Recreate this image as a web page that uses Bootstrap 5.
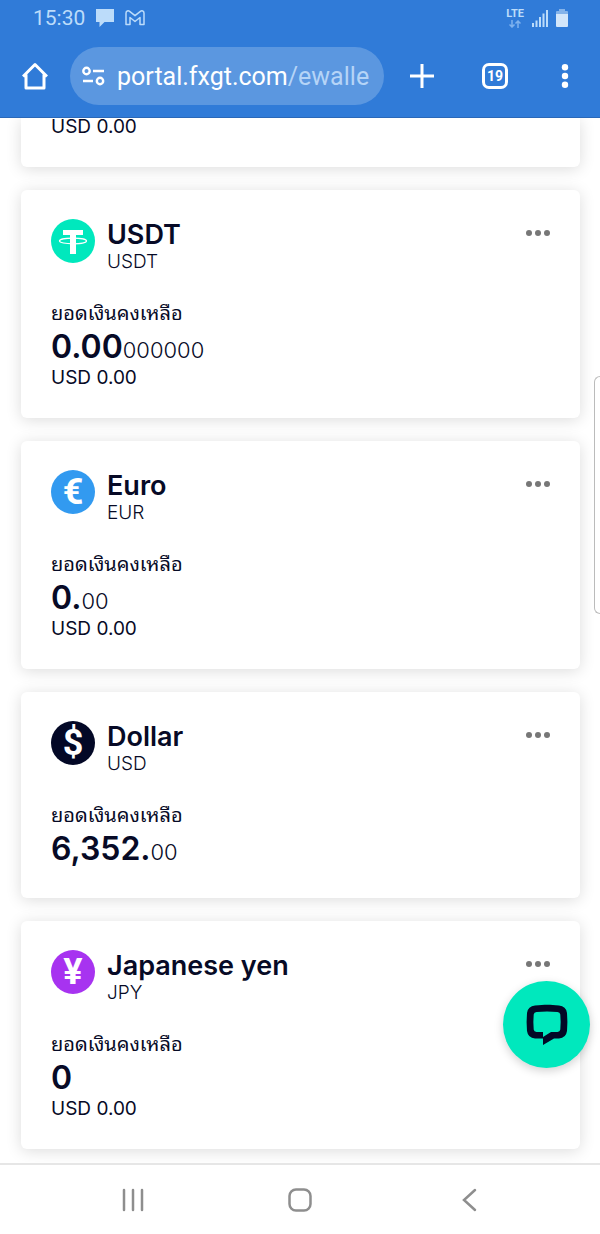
<!DOCTYPE html>
<html lang="th">
<head>
<meta charset="utf-8">
<meta name="viewport" content="width=device-width, initial-scale=1">
<title>FXGT eWallet</title>
<link href="https://cdn.jsdelivr.net/npm/bootstrap@5.3.0/dist/css/bootstrap.min.css" rel="stylesheet">
<style>
  :root { --ink: #070a26; --brand: #307bd8; --mint: #00e8bd; }
  body { font-family: Inter, "Noto Sans", sans-serif; color: var(--ink); background: #fff; }
  button { border: 0; background: none; padding: 0; color: inherit; line-height: 1; }
  svg { display: block; }
  .browser-bar { z-index: 2; background: var(--brand); border-bottom: 1px solid #2a68b8; font-family: Roboto, sans-serif; color: #fff; }
  .status-row { height: 36px; padding: 0 32px 0 33px; color: #bcdcfa; font-size: 21px; line-height: 36px; }
  .notices { gap: 10px; }
  .lte { font-size: 11px; font-weight: 700; line-height: 12px; }
  .toolbar-row { padding: 11px 26px 12px 22px; gap: 22px; }
  .address { min-width: 0; height: 58px; border-radius: 29px; background: #5b97e0; padding: 0 10px 0 12px; gap: 12px; font-size: 25px; }
  .address .path { color: #b5d4f7; }
  .actions { gap: 48px; padding-left: 4px; }
  .tab-count { width: 26px; height: 26px; border: 3px solid #fff; border-radius: 7px; font-size: 14px; font-weight: 700; }
  .wallets { padding: 0 20px 14px 21px; gap: 23px; }
  .wallet { border: 0; border-radius: 6px; padding: 29px 30px; box-shadow: 0 2px 16px rgba(0, 0, 0, .14); }
  .wallet:not(.wallet-cut) { min-height: 205px; }
  .wallet-cut { padding-top: 0; padding-bottom: 31px; border-top-left-radius: 0; border-top-right-radius: 0; }
  .wallet-cut .fiat { line-height: 18px; }
  .wallet-head { gap: 12px; margin-bottom: 24px; }
  .coin { width: 44px; height: 44px; border-radius: 50%; color: #fff; font: 700 36px/44px Roboto, sans-serif; flex: none; }
  .coin-usdt { background: var(--mint); }
  .coin-eur { background: #329af0; }
  .coin-usd { background: #030826; }
  .coin-jpy { background: #a733f0; }
  .coin-name { font-size: 27px; line-height: 32px; font-weight: 600; margin: 0; }
  .coin-code { font-size: 19px; line-height: 22px; font-weight: 300; }
  .caption-th { font-family: "Noto Sans Thai Looped", Loma, Garuda, Waree, "Noto Serif Thai", "Noto Sans Thai", sans-serif; font-size: 20px; line-height: 28px; margin-bottom: 2px; }
  .amount { font-size: 32px; line-height: 40px; font-weight: 600; }
  .amount-tail { font-size: 22px; line-height: 22px; font-weight: 300; }
  .fiat { font-size: 19px; line-height: 22px; }
  .more { margin-top: 10px; }
  .chat { position: fixed; right: 10px; bottom: 166px; width: 87px; height: 87px; border-radius: 50%; background: var(--mint); box-shadow: 0 3px 10px rgba(0, 0, 0, .18); }
  .edge-handle { position: fixed; right: 0; top: 376px; width: 6px; height: 238px; border: 1px solid #bbb; border-right: 0; border-radius: 8px 0 0 8px; background: #fff; }
  .system-nav { z-index: 1; background: #fff; border-top: 2px solid #e6e6e6; height: 71px; padding: 0 49px; }
</style>
</head>
<body class="d-flex flex-column min-vh-100">
<header class="browser-bar position-relative">
  <div class="status-row d-flex align-items-center justify-content-between">
    <div class="notices d-flex align-items-center">
      <span>15:30</span>
      <svg width="20" height="18" viewBox="0 0 20 18" fill="currentColor"><path d="M1 0h18v13h-9.500l-5 5v-5H1z"/></svg>
      <svg width="20" height="16" viewBox="0 0 20 16" fill="none" stroke="currentColor" stroke-width="1.500" stroke-linejoin="round"><path d="M1 14.500V3.200C1 .8 3.200.3 4.600 1.400L10 5.700l5.400-4.300C16.800.3 19 .8 19 3.200V14.500h-4V7.500l-5 4-5-4v7z"/></svg>
    </div>
    <div class="d-flex align-items-center gap-2">
      <div class="lte text-center">LTE
        <svg class="mx-auto" width="12" height="8" viewBox="0 0 12 8" fill="none" stroke="#7fb2ee" stroke-width="1.500"><path d="M3 0v7M.5 4.500 3 7l2.500-2.500M9 8V1M6.500 3.500 9 1l2.500 2.500"/></svg>
      </div>
      <svg width="16" height="17" viewBox="0 0 16 17" fill="currentColor"><path d="M0 13h2v4H0zM3.500 10.500h2V17h-2zM7 7h2v10H7zM10.500 3.500h2V17h-2zM14 0h2v17h-2z"/></svg>
      <svg width="12" height="18" viewBox="0 0 12 18"><path d="M3 0h6v2h2q1 0 1 1v2H0V3q0-1 1-1h2z" fill="#84b3ea"/><path d="M0 5h12v12q0 1-1 1H1q-1 0-1-1z" fill="#d3e6fa"/></svg>
    </div>
  </div>
  <div class="toolbar-row d-flex align-items-center">
    <button type="button" aria-label="Home"><svg width="26" height="28" viewBox="0 0 26 28" fill="none" stroke="#fff" stroke-width="3" stroke-linejoin="round"><path d="M1 14.500 13 2.500l12 12M4 12.500V26h18V12.500"/></svg></button>
    <button type="button" class="address d-flex align-items-center flex-grow-1" aria-label="Address">
      <svg class="flex-shrink-0" width="23" height="20" viewBox="0 0 23 20" fill="none" stroke="#fff" stroke-width="2.400"><circle cx="4.500" cy="5" r="3.200"/><path d="M11 5h11M1 15h10"/><circle cx="18" cy="15" r="3.200"/></svg>
      <span class="text-nowrap">portal.fxgt.com<span class="path">/ewalle</span></span>
    </button>
    <div class="actions d-flex align-items-center">
      <button type="button" aria-label="New tab"><svg width="24" height="24" viewBox="0 0 24 24" stroke="#fff" stroke-width="3"><path d="M12 0v24M0 12h24"/></svg></button>
      <button type="button" class="tab-count" aria-label="Open tabs">19</button>
      <button type="button" aria-label="Menu"><svg width="18" height="24" viewBox="0 0 18 24" fill="#fff"><circle cx="9" cy="3.200" r="3.200"/><circle cx="9" cy="12" r="3.200"/><circle cx="9" cy="20.800" r="3.200"/></svg></button>
    </div>
  </div>
</header>

<main class="wallets d-flex flex-column flex-grow-1">
  <section class="card wallet wallet-cut"><div class="fiat">USD 0.00</div></section>

  <section class="card wallet">
    <div class="wallet-head d-flex align-items-start">
      <div class="coin coin-usdt"><svg width="44" height="44" viewBox="0 0 44 44"><path d="M12 11h20v5h-7v19h-6V16h-7z" fill="#fff"/><ellipse cx="22" cy="22" rx="13.500" ry="2.800" fill="none" stroke="#fff" stroke-width="1.200"/><path d="M19 21h6v3h-6z" fill="#fff"/></svg></div>
      <div class="flex-grow-1"><h2 class="coin-name">USDT</h2><div class="coin-code">USDT</div></div>
      <button type="button" class="more" aria-label="More"><svg width="24" height="8" viewBox="0 0 24 8" fill="#777"><circle cx="3" cy="4" r="3"/><circle cx="12" cy="4" r="3"/><circle cx="21" cy="4" r="3"/></svg></button>
    </div>
    <div class="caption-th">ยอดเงินคงเหลือ</div>
    <div class="amount">0.00<span class="amount-tail">000000</span></div>
    <div class="fiat">USD 0.00</div>
  </section>

  <section class="card wallet">
    <div class="wallet-head d-flex align-items-start">
      <div class="coin coin-eur text-center">€</div>
      <div class="flex-grow-1"><h2 class="coin-name">Euro</h2><div class="coin-code">EUR</div></div>
      <button type="button" class="more" aria-label="More"><svg width="24" height="8" viewBox="0 0 24 8" fill="#777"><circle cx="3" cy="4" r="3"/><circle cx="12" cy="4" r="3"/><circle cx="21" cy="4" r="3"/></svg></button>
    </div>
    <div class="caption-th">ยอดเงินคงเหลือ</div>
    <div class="amount">0.<span class="amount-tail">00</span></div>
    <div class="fiat">USD 0.00</div>
  </section>

  <section class="card wallet">
    <div class="wallet-head d-flex align-items-start">
      <div class="coin coin-usd text-center">$</div>
      <div class="flex-grow-1"><h2 class="coin-name">Dollar</h2><div class="coin-code">USD</div></div>
      <button type="button" class="more" aria-label="More"><svg width="24" height="8" viewBox="0 0 24 8" fill="#777"><circle cx="3" cy="4" r="3"/><circle cx="12" cy="4" r="3"/><circle cx="21" cy="4" r="3"/></svg></button>
    </div>
    <div class="caption-th">ยอดเงินคงเหลือ</div>
    <div class="amount">6,352.<span class="amount-tail">00</span></div>
  </section>

  <section class="card wallet">
    <div class="wallet-head d-flex align-items-start">
      <div class="coin coin-jpy text-center">¥</div>
      <div class="flex-grow-1"><h2 class="coin-name">Japanese yen</h2><div class="coin-code">JPY</div></div>
      <button type="button" class="more" aria-label="More"><svg width="24" height="8" viewBox="0 0 24 8" fill="#777"><circle cx="3" cy="4" r="3"/><circle cx="12" cy="4" r="3"/><circle cx="21" cy="4" r="3"/></svg></button>
    </div>
    <div class="caption-th">ยอดเงินคงเหลือ</div>
    <div class="amount">0</div>
    <div class="fiat">USD 0.00</div>
  </section>
</main>

<div class="edge-handle"></div>
<button type="button" class="chat d-flex align-items-center justify-content-center" aria-label="Chat">
  <svg width="42" height="42" viewBox="0 0 42 42"><path fill="#030826" fill-rule="evenodd" d="M9 1.500C19 .5 24 .5 33 1.500q7 .5 8 7.500.8 9 0 18-1 7-8 7.500h-5L17 41v-6.500H9q-7-.5-8-7.500-.8-9 0-18 1-7 8-7.500zM10.500 8q-2.500.3-2.800 2.500-.7 7.500 0 15 .3 2.200 2.800 2.500H17v5l8-5h6.500q2.500-.3 2.800-2.500.7-7.500 0-15-.3-2.200-2.800-2.500-10.500-1-21 0z"/></svg>
</button>

<nav class="system-nav position-relative d-flex align-items-center justify-content-around" aria-label="System">
  <button type="button" aria-label="Recents"><svg width="24" height="24" viewBox="0 0 24 24" stroke="#8e8e8e" stroke-width="2.500" stroke-linecap="round"><path d="M3 2v20M12 2v20M21 2v20"/></svg></button>
  <button type="button" aria-label="Home screen"><svg width="24" height="24" viewBox="0 0 24 24" fill="none" stroke="#8e8e8e" stroke-width="2.500"><rect x="1.500" y="1.500" width="21" height="21" rx="6.500"/></svg></button>
  <button type="button" aria-label="Back"><svg width="24" height="24" viewBox="0 0 24 24" fill="none" stroke="#8e8e8e" stroke-width="2.500" stroke-linecap="round"><path d="M20 2 9 12l11 10"/></svg></button>
</nav>
<script src="https://cdn.jsdelivr.net/npm/bootstrap@5.3.0/dist/js/bootstrap.bundle.min.js"></script>
</body>
</html>
